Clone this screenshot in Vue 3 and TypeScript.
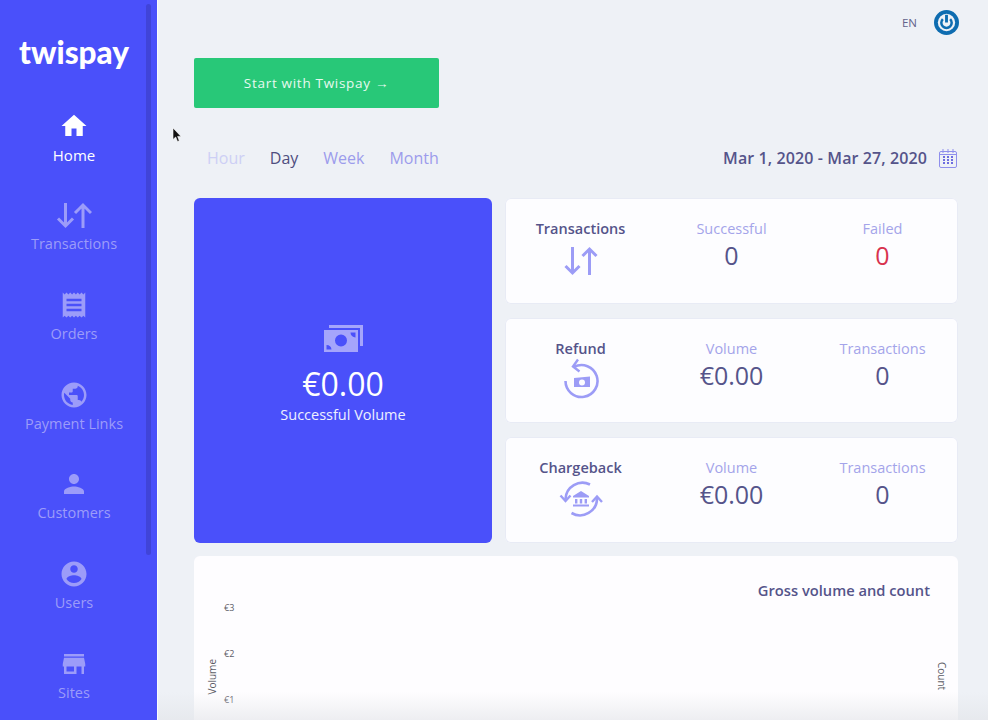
<script setup lang="ts">
const nav = [
  { label: 'Home', active: true, icon: 'M10 20v-6h4v6h5v-8h3L12 3 2 12h3v8z' },
  { label: 'Transactions', active: false, icon: 'arrows' },
  { label: 'Orders', active: false, icon: 'M19.5 3.5 18 2l-1.5 1.5L15 2l-1.5 1.5L12 2l-1.5 1.5L9 2 7.5 3.5 6 2 4.5 3.5 3 2v20l1.5-1.5L6 22l1.5-1.5L9 22l1.5-1.5L12 22l1.5-1.5L15 22l1.5-1.5L18 22l1.5-1.5L21 22V2zM18 17H6v-2h12zm0-4H6v-2h12zm0-4H6V7h12z' },
  { label: 'Payment Links', active: false, icon: 'M12 2C6.48 2 2 6.48 2 12s4.48 10 10 10 10-4.48 10-10S17.52 2 12 2zm-1 17.93c-3.95-.49-7-3.85-7-7.93 0-.62.08-1.21.21-1.79L9 15v1c0 1.1.9 2 2 2zm6.9-2.54c-.26-.81-1-1.39-1.9-1.39h-1v-3c0-.55-.45-1-1-1H8v-2h2c.55 0 1-.45 1-1V7h2c1.1 0 2-.9 2-2v-.41c2.93 1.19 5 4.06 5 7.41 0 2.08-.8 3.97-2.1 5.39z' },
  { label: 'Customers', active: false, icon: 'M12 12c2.21 0 4-1.79 4-4s-1.79-4-4-4-4 1.79-4 4 1.79 4 4 4zm0 2c-2.67 0-8 1.34-8 4v2h16v-2c0-2.66-5.33-4-8-4z' },
  { label: 'Users', active: false, icon: 'M12 2C6.48 2 2 6.48 2 12s4.48 10 10 10 10-4.48 10-10S17.52 2 12 2zm0 3c1.66 0 3 1.34 3 3s-1.34 3-3 3-3-1.34-3-3 1.34-3 3-3zm0 14.2c-2.5 0-4.71-1.28-6-3.22.03-1.99 4-3.08 6-3.08 1.99 0 5.97 1.09 6 3.08-1.29 1.94-3.5 3.22-6 3.22z' },
  { label: 'Sites', active: false, icon: 'M20 4H4v2h16zm1 10v-2l-1-5H4l-1 5v2h1v6h10v-6h4v6h2v-6zm-9 4H6v-4h6z' },
]

const ranges = [
  { label: 'Hour', state: 'off' },
  { label: 'Day', state: 'on' },
  { label: 'Week', state: '' },
  { label: 'Month', state: '' },
]

const stats = [
  { title: 'Transactions', icon: 'arrows', a: 'Successful', av: '0', b: 'Failed', bv: '0', failed: true },
  { title: 'Refund', icon: 'refund', a: 'Volume', av: '€0.00', b: 'Transactions', bv: '0', failed: false },
  { title: 'Chargeback', icon: 'bank', a: 'Volume', av: '€0.00', b: 'Transactions', bv: '0', failed: false },
]
</script>

<template>
  <div class="page">
    <aside class="sidebar">
      <div class="scroll-thumb"></div>
      <div class="logo">twispay</div>
      <nav class="nav">
        <div v-for="item in nav" :key="item.label" class="nav-item" :class="{ active: item.active }">
          <svg v-if="item.icon === 'arrows'" class="nav-icon wide" viewBox="0 0 36 30" fill="none" stroke="currentColor" stroke-width="3">
            <path d="M9.500 3v23M2 18.500l7.500 7.500 7.500-7.500" />
            <path d="M27 28V5M19 13l8-8 8 8" />
          </svg>
          <svg v-else class="nav-icon" viewBox="0 0 24 24" fill="currentColor"><path :d="item.icon" /></svg>
          <span>{{ item.label }}</span>
        </div>
      </nav>
    </aside>

    <main class="main">
      <header class="topbar">
        <span class="lang">EN</span>
        <svg class="power" viewBox="0 0 26 26">
          <circle cx="13" cy="13" r="13" fill="#0e6cb0" />
          <circle cx="13" cy="13" r="9" fill="#eef1f6" />
          <path d="M9.200 9.500a5.400 5.400 0 1 0 7.600 0" fill="none" stroke="#0e6cb0" stroke-width="2.600" />
          <path d="M13 5v8" stroke="#0e6cb0" stroke-width="3" />
        </svg>
      </header>

      <button class="start">Start with Twispay →</button>

      <div class="filters">
        <div class="ranges">
          <span v-for="r in ranges" :key="r.label" class="range" :class="r.state">{{ r.label }}</span>
        </div>
        <div class="dates">
          <span>Mar 1, 2020 - Mar 27, 2020</span>
          <svg class="calendar" viewBox="0 0 18 19" fill="none" stroke="#8f8fec">
            <rect x="0.5" y="2.5" width="17" height="16" rx="1.500" />
            <path d="M4 0v4M9 0v4M14 0v4M0.500 5.500h17" />
            <path d="M4 8h2M8 8h2M12 8h2M4 11h2M8 11h2M12 11h2M4 14h2M8 14h2M12 14h2" stroke="#6d6de0" stroke-width="1.800" />
          </svg>
        </div>
      </div>

      <section class="summary">
        <div class="volume">
          <svg class="cash" viewBox="0 0 39 27">
            <path d="M5 0h34v21h-3V3H5z" fill="#a5a5fb" />
            <path fill-rule="evenodd" fill="#a5a5fb" d="M0 5h34v22H0zm17 4.500a6 6 0 1 0 0 12 6 6 0 0 0 0-12zM2.500 20v4.500h5A5 5 0 0 0 2.500 20zM26.500 7.500a5 5 0 0 0 5 5v-5z" />
          </svg>
          <div class="volume-value">€0.00</div>
          <div class="volume-label">Successful Volume</div>
        </div>

        <div class="stats">
          <div v-for="s in stats" :key="s.title" class="stat">
            <div class="col">
              <div class="stat-title">{{ s.title }}</div>
              <svg v-if="s.icon === 'arrows'" class="stat-icon" viewBox="0 0 36 36" fill="none" stroke="#9c9cf6" stroke-width="3">
                <path d="M9.500 7v26M2.500 26l7 7 7-7" />
                <path d="M26.500 35V9M19.500 16l7-7 7 7" />
              </svg>
              <svg v-else-if="s.icon === 'refund'" class="stat-icon refund" viewBox="0 0 36 41" fill="none" stroke="#9c9cf6" stroke-width="2.600">
                <path d="M11 8.900A16 16 0 1 1 2.500 23" />
                <path d="M15 1.500 10 8.500l6.500 5" stroke-width="2.400" />
                <path fill-rule="evenodd" stroke="none" fill="#9c9cf6" d="M11 20 27 18.500v10.500H11zm8 1.500a3 3 0 1 0 0 6 3 3 0 0 0 0-6z" />
              </svg>
              <svg v-else class="stat-icon bank" viewBox="0 0 44 38" fill="none" stroke="#9c9cf6" stroke-width="2.600">
                <path d="M31 4.500A17 17 0 0 0 6.500 19" />
                <path d="M1.500 15.500l5 5.500 5-5.500" stroke-width="2.400" />
                <path d="M12.500 33A17 17 0 0 0 38 18" />
                <path d="M33 22l5-5.500 5 5.500" stroke-width="2.400" />
                <path stroke="none" fill="#9c9cf6" d="M22 11l-8 5v1.500h16V16zM16 19h2.400v4.500H16zM20.800 19h2.400v4.500h-2.400zM25.600 19H28v4.500h-2.400zM14 24.500h16V26.500H14z" />
              </svg>
            </div>
            <div class="col">
              <div class="stat-label">{{ s.a }}</div>
              <div class="stat-value">{{ s.av }}</div>
            </div>
            <div class="col">
              <div class="stat-label">{{ s.b }}</div>
              <div class="stat-value" :class="{ failed: s.failed }">{{ s.bv }}</div>
            </div>
          </div>
        </div>
      </section>

      <section class="chart">
        <div class="chart-title">Gross volume and count</div>
        <div class="chart-body">
          <span class="axis-name volume-axis">Volume</span>
          <div class="ticks">
            <span>€3</span>
            <span>€2</span>
            <span>€1</span>
          </div>
          <span class="axis-name count-axis">Count</span>
        </div>
      </section>

      <div class="fade"></div>
      <svg class="cursor" viewBox="0 0 10 15">
        <path d="M1 0v11.500l2.700-2.500 1.800 4.500 1.800-.8L5.600 8.400H9z" fill="#111" stroke="#fff" stroke-width=".6" />
      </svg>
    </main>
  </div>
</template>

<style>
html,
body {
  margin: 0;
  overflow: hidden;
}
</style>

<style scoped>
.page {
  display: flex;
  height: 720px;
  overflow: hidden;
  background: #eef1f6;
  font-family: 'Open Sans', 'Liberation Sans', sans-serif;
  color: #55548a;
}

.sidebar {
  position: relative;
  flex: 0 0 158px;
  box-sizing: border-box;
  padding-right: 9px;
  background: #4a50fa;
  border-right: 1px solid #fafbff;
  color: #9c9cf9;
  text-align: center;
}

.scroll-thumb {
  position: absolute;
  top: 4px;
  left: 146px;
  width: 5px;
  height: 551px;
  border-radius: 3px;
  background: #4044d8;
}

.logo {
  padding-top: 30px;
  height: 53px;
  color: #fff;
  font-family: 'Lato', sans-serif;
  font-size: 31.500px;
  font-weight: 900;
  line-height: 44px;
}

.nav {
  margin-top: 27.500px;
}

.nav-item {
  height: 89.700px;
  font-size: 14.500px;
  line-height: 20px;
}

.nav-item span {
  display: block;
  margin-top: 4px;
}

.nav-item.active {
  color: #fff;
  font-size: 15px;
  font-weight: 500;
}

.nav-icon {
  display: block;
  width: 30px;
  height: 30px;
  margin: 0 auto;
}

.nav-icon.wide {
  width: 36px;
}

.main {
  position: relative;
  flex: 1;
  box-sizing: border-box;
  padding: 0 30px 0 36px;
}

.topbar {
  display: flex;
  justify-content: flex-end;
  align-items: center;
  gap: 17px;
  height: 44px;
  margin-right: -1px;
}

.lang {
  font-size: 11.500px;
  color: #63638c;
}

.power {
  width: 25px;
  height: 25px;
}

.start {
  display: block;
  width: 245px;
  height: 50px;
  margin-top: 14px;
  border: 0;
  border-radius: 2px;
  background: #28c878;
  color: #e6f9ef;
  font-family: inherit;
  font-size: 13.500px;
  letter-spacing: 0.7px;
}

.filters {
  display: flex;
  justify-content: space-between;
  align-items: center;
  height: 32px;
  margin-top: 34px;
  padding-left: 13px;
  font-size: 16px;
}

.ranges {
  display: flex;
  gap: 25px;
}

.range {
  color: #9c9cec;
}

.range.off {
  color: #cdcff5;
}

.range.on {
  color: #4f4e80;
}

.dates {
  display: flex;
  align-items: center;
  gap: 12px;
  margin-right: 1px;
  font-weight: 600;
  font-size: 16px;
  letter-spacing: 0.1px;
}

.calendar {
  width: 18px;
  height: 19px;
}

.summary {
  display: grid;
  grid-template-columns: 298px 453px;
  gap: 13px;
  margin-top: 24px;
  height: 345px;
}

.volume {
  display: flex;
  flex-direction: column;
  align-items: center;
  justify-content: center;
  box-sizing: border-box;
  padding-top: 9px;
  border-radius: 6px;
  background: #4a50fa;
  color: #fff;
}

.cash {
  width: 39px;
  height: 27px;
}

.volume-value {
  margin-top: 10px;
  font-size: 32px;
  line-height: 44px;
}

.volume-label {
  margin-top: -1px;
  font-size: 14.500px;
  line-height: 20px;
  color: #eef0ff;
}

.stats {
  display: grid;
  grid-template-rows: 105.500px 105.500px 105.500px;
  row-gap: 14px;
}

.stat {
  display: grid;
  grid-template-columns: repeat(3, 1fr);
  box-sizing: border-box;
  padding-top: 21px;
  border-radius: 6px;
  background: #fdfdff;
  box-shadow: inset 0 0 0 1px #e8ebf5;
}

.col {
  display: flex;
  flex-direction: column;
  align-items: center;
}

.stat-title {
  font-size: 14.500px;
  font-weight: 600;
  line-height: 20px;
}

.stat-label {
  font-size: 14.500px;
  line-height: 20px;
  color: #a4a4ea;
}

.stat-value {
  font-size: 25px;
  line-height: 32px;
}

.stat-value.failed {
  color: #d8324e;
}

.stat-icon {
  width: 36px;
  height: 36px;
  margin-top: 1px;
}

.stat-icon.refund {
  height: 41px;
  margin-top: -1px;
}

.stat-icon.bank {
  width: 44px;
  height: 38px;
  margin-top: 2px;
}

.chart {
  margin-top: 13px;
  height: 300px;
  box-sizing: border-box;
  padding: 24px 28px 0 12px;
  border-radius: 6px;
  background: #fefdff;
}

.chart-title {
  text-align: right;
  font-size: 14.700px;
  font-weight: 600;
  line-height: 20px;
}

.chart-body {
  position: relative;
  display: flex;
  padding-top: 1px;
}

.ticks {
  display: flex;
  flex-direction: column;
  gap: 32px;
  margin: 0 0 0 18px;
  font-size: 9px;
  line-height: 14px;
  color: #5c5c66;
}

.axis-name {
  position: absolute;
  font-size: 10px;
  color: #5c5c66;
  writing-mode: vertical-rl;
}

.volume-axis {
  left: -1px;
  top: 59px;
  transform: rotate(180deg);
}

.count-axis {
  right: -19px;
  top: 62px;
}

.fade {
  position: absolute;
  left: 0;
  right: 0;
  bottom: 0;
  height: 28px;
  background: linear-gradient(to bottom, rgba(226, 228, 232, 0), rgba(226, 228, 232, 0.6));
}

.cursor {
  position: absolute;
  left: 14px;
  top: 128px;
  width: 10px;
  height: 15px;
}
</style>
